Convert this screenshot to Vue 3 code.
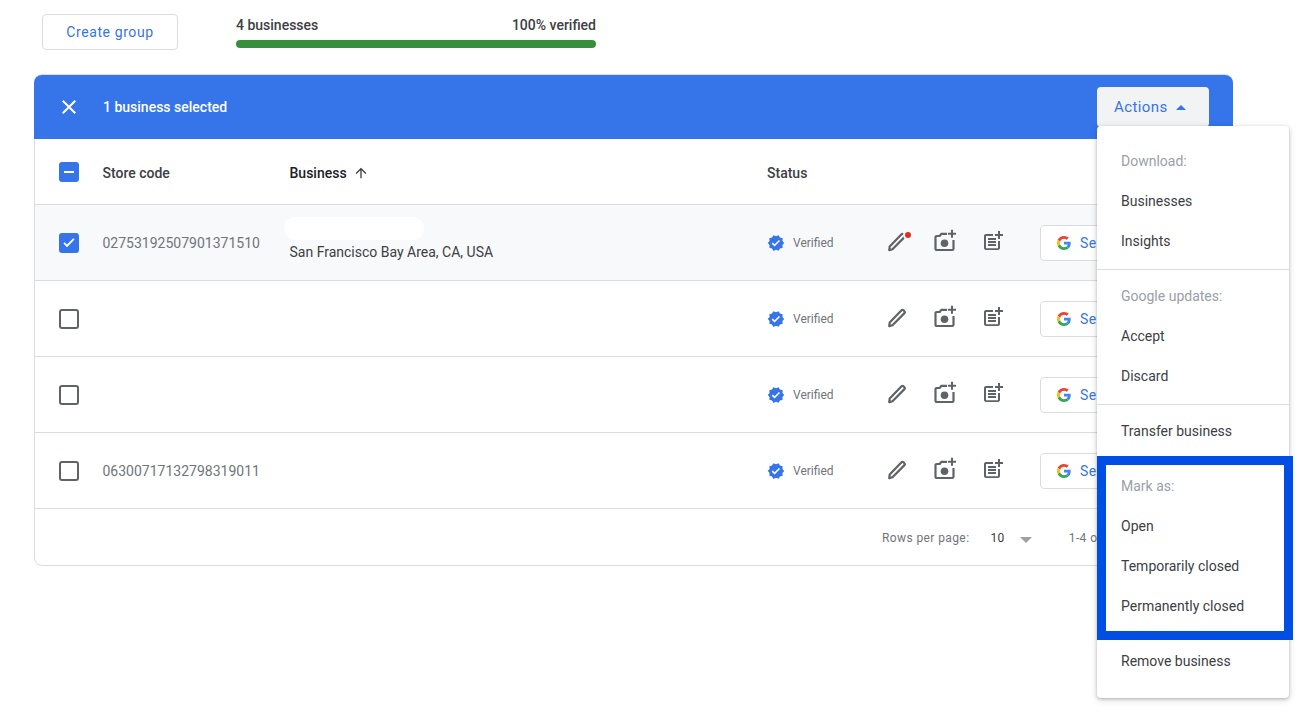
<template>
  <div class="page">
    <div class="topbar">
      <button class="create-btn">Create group</button>
      <div class="progress">
        <div class="progress-labels">
          <span>4 businesses</span>
          <span>100% verified</span>
        </div>
        <div class="progress-bar"></div>
      </div>
    </div>

    <div class="card">
      <div class="toolbar">
        <svg class="close-icon" width="24" height="24" viewBox="0 0 24 24">
          <path d="M19 6.41 17.59 5 12 10.59 6.41 5 5 6.41 10.59 12 5 17.59 6.41 19 12 13.41 17.59 19 19 17.59 13.41 12z" fill="#fff" />
        </svg>
        <span class="selected-text">1 business selected</span>
        <div class="actions">
          <button class="actions-btn">Actions <i class="caret-up"></i></button>
          <div class="menu">
            <div class="menu-group">
              <div class="menu-label">Download:</div>
              <div class="menu-item">Businesses</div>
              <div class="menu-item">Insights</div>
            </div>
            <div class="menu-group">
              <div class="menu-label">Google updates:</div>
              <div class="menu-item">Accept</div>
              <div class="menu-item">Discard</div>
            </div>
            <div class="menu-group transfer">
              <div class="menu-item">Transfer business</div>
            </div>
            <div class="menu-mark">
              <div class="menu-label">Mark as:</div>
              <div class="menu-item">Open</div>
              <div class="menu-item">Temporarily closed</div>
              <div class="menu-item">Permanently closed</div>
            </div>
            <div class="menu-item remove">Remove business</div>
          </div>
        </div>
      </div>

      <div class="grid-row head">
        <div class="cell-check">
          <span class="box on">
            <svg width="20" height="20" viewBox="0 0 20 20"><path d="M5 9h10v2H5z" fill="#fff" /></svg>
          </span>
        </div>
        <div class="th">Store code</div>
        <div class="th dark">
          Business
          <svg class="sort" width="16" height="16" viewBox="0 0 24 24">
            <path d="M4 12l1.41 1.41L11 7.83V20h2V7.83l5.58 5.59L20 12l-8-8-8 8z" fill="#3c4043" />
          </svg>
        </div>
        <div class="th">Status</div>
      </div>

      <div v-for="row in rows" :key="row.id" class="grid-row item" :class="{ selected: row.checked }">
        <div class="cell-check">
          <span class="box" :class="{ on: row.checked }">
            <svg v-if="row.checked" width="20" height="20" viewBox="0 0 20 20">
              <path d="M8 14.2 4.4 10.6l1.3-1.3L8 11.6l6.3-6.3 1.3 1.3z" fill="#fff" />
            </svg>
          </span>
        </div>
        <div class="code">{{ row.code }}</div>
        <div class="biz">
          <div v-if="row.location" class="smudge"></div>
          <div v-if="row.location" class="location">{{ row.location }}</div>
        </div>
        <div class="status">
          <svg width="18" height="18" viewBox="0 0 24 24">
            <path d="M23 12l-2.44-2.79.34-3.69-3.61-.82-1.89-3.2L12 2.96 8.6 1.5 6.71 4.69 3.1 5.5l.34 3.7L1 12l2.44 2.79-.34 3.7 3.61.82L8.6 22.5l3.4-1.47 3.4 1.46 1.89-3.19 3.61-.82-.34-3.69L23 12zm-12.91 4.72l-3.8-3.81 1.48-1.48 2.32 2.33 5.85-5.87 1.48 1.48-7.33 7.35z" fill="#3574e9" />
          </svg>
          <span>Verified</span>
        </div>
        <div class="tool">
          <svg width="24" height="24" viewBox="0 0 24 24">
            <path d="M4.2 21.2l.5-3.700L16.300 5.500a1.700 1.700 0 0 1 2.400 0l.5.5a1.700 1.700 0 0 1 0 2.400L7.500 20.300z" fill="none" stroke="#5f6368" stroke-width="2.2" stroke-linejoin="round" />
          </svg>
          <i v-if="row.dot" class="dot"></i>
        </div>
        <div class="tool">
          <svg width="24" height="24" viewBox="0 0 24 24">
            <path d="M14 4.800H8.400L6.700 7H3.800A1.300 1.300 0 0 0 2.500 8.300v11.400A1.300 1.300 0 0 0 3.800 21h15.400a1.300 1.300 0 0 0 1.300-1.300V11" fill="none" stroke="#5f6368" stroke-width="2.200" />
            <circle cx="11.500" cy="14.300" r="3.800" fill="#5f6368" />
            <path d="M19 .8v8M15 4.800h8" stroke="#5f6368" stroke-width="2" fill="none" />
          </svg>
        </div>
        <div class="tool">
          <svg width="24" height="24" viewBox="0 0 24 24">
            <path d="M17 19.220H5V7h7V5H5c-1.100 0-2 .9-2 2v12c0 1.100.9 2 2 2h12c1.100 0 2-.9 2-2v-7h-2v7.220z" fill="#5f6368" />
            <path d="M19 2h-2v3h-3c.01.01 0 2 0 2h3v2.990c.01.01 2 0 2 0V7h3V5h-3V2zM7 9h8v2H7zM7 12v2h8v-2H7zM7 15h8v2H7z" fill="#5f6368" />
          </svg>
        </div>
        <button class="see-btn">
          <svg width="14" height="14" viewBox="0 0 48 48">
            <path fill="#EA4335" d="M24 9.500c3.540 0 6.710 1.220 9.210 3.600l6.850-6.850C35.900 2.380 30.470 0 24 0 14.620 0 6.510 5.380 2.560 13.220l7.980 6.190C12.430 13.720 17.740 9.500 24 9.500z" />
            <path fill="#4285F4" d="M46.980 24.550c0-1.570-.15-3.090-.38-4.550H24v9.020h12.940c-.58 2.960-2.260 5.480-4.780 7.180l7.730 6c4.510-4.180 7.090-10.360 7.090-17.650z" />
            <path fill="#FBBC05" d="M10.530 28.590c-.48-1.450-.76-2.990-.76-4.590s.27-3.140.76-4.590l-7.980-6.190C.92 16.460 0 20.120 0 24c0 3.880.92 7.540 2.560 10.780l7.970-6.190z" />
            <path fill="#34A853" d="M24 48c6.480 0 11.930-2.130 15.890-5.810l-7.730-6c-2.150 1.450-4.920 2.300-8.160 2.300-6.260 0-11.570-4.220-13.470-9.910l-7.980 6.190C6.510 42.620 14.620 48 24 48z" />
          </svg>
          <span>Se</span>
        </button>
      </div>

      <div class="footer">
        <span>Rows per page:</span>
        <span class="size">10</span>
        <i class="caret-down"></i>
        <span class="range">1-4 of</span>
      </div>
    </div>
  </div>
</template>

<script setup>
const rows = [
  { id: 1, code: "02753192507901371510", location: "San Francisco Bay Area, CA, USA", checked: true, dot: true },
  { id: 2, code: "", location: "", checked: false, dot: false },
  { id: 3, code: "", location: "", checked: false, dot: false },
  { id: 4, code: "06300717132798319011", location: "", checked: false, dot: false },
];
</script>

<style>
html,
body {
  background: #fff;
  overflow: hidden;
}
</style>

<style scoped>
.page {
  font-family: Roboto, "Liberation Sans", sans-serif;
  font-size: 14px;
  color: #3c4043;
  padding-top: 14px;
  height: 703px;
}

/* top part */
.topbar {
  display: flex;
  align-items: flex-start;
  margin-left: 42px;
}

.create-btn {
  width: 136px;
  height: 36px;
  background: #fff;
  border: 1px solid #dadce0;
  border-radius: 4px;
  color: #3574e9;
  font-family: inherit;
  font-size: 14px;
  letter-spacing: 0.6px;
  padding: 0;
}

.progress {
  width: 360px;
  margin-left: 58px;
  margin-top: 1px;
}

.progress-labels {
  display: flex;
  justify-content: space-between;
  line-height: 20px;
  font-weight: 500;
  margin-bottom: 5px;
}

.progress-bar {
  height: 8px;
  border-radius: 4px;
  background: #388e3c;
}

/* card */
.card {
  width: 1197px;
  margin: 24px 0 0 34px;
  border: 1px solid #dadce0;
  border-radius: 8px;
}

.toolbar {
  height: 64px;
  margin: 0 -1px;
  display: flex;
  align-items: center;
  background: #3574e9;
  border-radius: 8px 8px 0 0;
  color: #fff;
}

.close-icon {
  margin-left: 23px;
}

.selected-text {
  margin-left: 22px;
  font-weight: 500;
}

.actions {
  position: relative;
  margin-left: auto;
  margin-right: 24px;
}

.actions-btn {
  width: 112px;
  height: 40px;
  background: #f1f3f4;
  border: none;
  border-radius: 4px;
  color: #3574e9;
  font-family: inherit;
  font-size: 15px;
  letter-spacing: 0.4px;
  padding: 0 0 0 17px;
  display: flex;
  align-items: center;
  gap: 8px;
}

.caret-up {
  width: 0;
  height: 0;
  border-left: 5px solid transparent;
  border-right: 5px solid transparent;
  border-bottom: 5px solid #3574e9;
}

/* dropdown */
.menu {
  position: absolute;
  top: 39px;
  left: 0;
  width: 192px;
  height: 572px;
  box-sizing: border-box;
  padding-top: 15px;
  background: #fff;
  border-radius: 4px;
  box-shadow: 0 1px 3px rgba(60, 64, 67, 0.3), 0 2px 6px 1px rgba(60, 64, 67, 0.15);
  color: #3c4043;
  z-index: 5;
}

.menu-group {
  padding-bottom: 8px;
  margin-bottom: 6px;
  border-bottom: 1px solid #dadce0;
}

.menu-group.transfer {
  border-bottom: none;
  padding-bottom: 0;
  margin-bottom: 5px;
}

.menu-label,
.menu-item {
  height: 40px;
  line-height: 40px;
  padding-left: 24px;
  white-space: nowrap;
}

.menu-label {
  color: #9aa0a6;
}

.menu-mark {
  border: 9px solid #004ee4;
  margin-right: -4px;
  padding: 1px 0 5px;
}

.menu-mark .menu-label,
.menu-mark .menu-item {
  padding-left: 15px;
}

.menu-item.remove {
  margin-top: 1px;
}

/* table */
.grid-row {
  display: grid;
  grid-template-columns: 67.5px 187px 477.5px 106px 48px 48px 48px 1fr;
  align-items: center;
  border-bottom: 1px solid #dadce0;
  box-sizing: border-box;
}

.grid-row.head {
  height: 66px;
}

.grid-row.item {
  height: 76px;
}

.grid-row.item.selected {
  background: #f8f9fa;
}

.cell-check {
  padding-left: 24px;
  display: flex;
}

.box {
  width: 20px;
  height: 20px;
  box-sizing: border-box;
  border: 2px solid #5f6368;
  border-radius: 3px;
  background: #fff;
  display: flex;
  align-items: center;
  justify-content: center;
}

.box.on {
  border: none;
  background: #3574e9;
}

.th {
  font-weight: 500;
  color: #3c4043;
  display: flex;
  align-items: center;
  padding-top: 2px;
}

.th.dark {
  color: #202124;
}

.sort {
  margin-left: 6px;
}

.code {
  color: #70757a;
}

.biz {
  position: relative;
  padding-top: 18px;
}

.smudge {
  position: absolute;
  left: -6px;
  top: -7px;
  width: 140px;
  height: 23px;
  background: #fff;
  border-radius: 12px;
}

.location {
  color: #3c4043;
  line-height: 20px;
}

.status {
  display: flex;
  align-items: center;
  gap: 8px;
  font-size: 12px;
  color: #70757a;
}

.tool {
  position: relative;
  display: flex;
  justify-content: center;
  margin-bottom: 4px;
}

.dot {
  position: absolute;
  top: 3px;
  left: 32px;
  width: 6px;
  height: 6px;
  border-radius: 50%;
  background: #d93025;
  box-shadow: 0 0 0 2px #f8f9fa;
}

.see-btn {
  margin-left: 23px;
  width: 160px;
  height: 36px;
  background: #fff;
  border: 1px solid #dadce0;
  border-radius: 4px;
  color: #3574e9;
  font-family: inherit;
  font-size: 14px;
  letter-spacing: 0.4px;
  display: flex;
  align-items: center;
  gap: 9px;
  padding: 0 0 0 16px;
}

.footer {
  height: 56px;
  display: flex;
  align-items: center;
  padding: 2px 0 0 847px;
  box-sizing: border-box;
  font-size: 12px;
  letter-spacing: 0.4px;
  color: #70757a;
}

.size {
  margin-left: 21px;
  color: #3c4043;
}

.caret-down {
  margin-left: 15px;
  margin-top: 3px;
  width: 0;
  height: 0;
  border-left: 6px solid transparent;
  border-right: 6px solid transparent;
  border-top: 6px solid #9aa0a6;
}

.range {
  margin-left: 37px;
}
</style>
